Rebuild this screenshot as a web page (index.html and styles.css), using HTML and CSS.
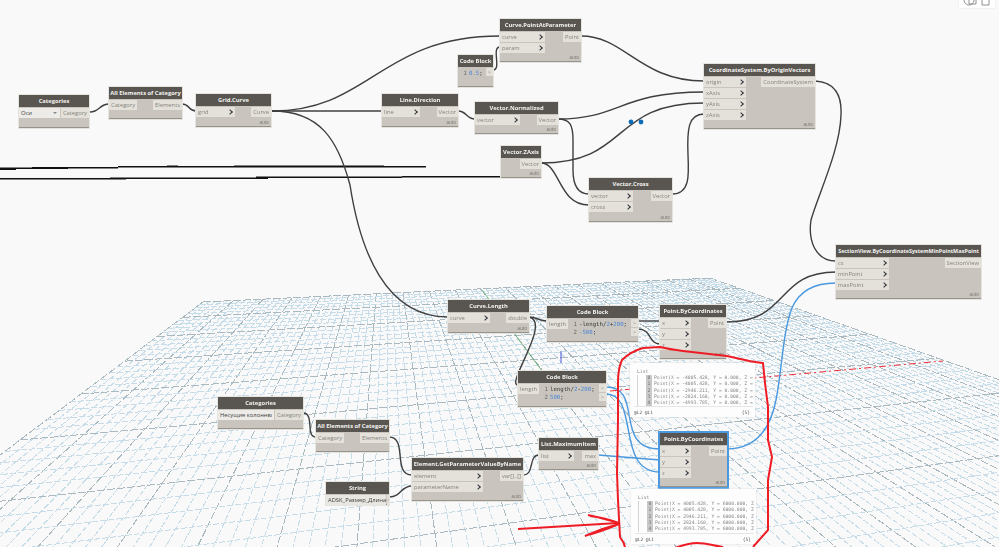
FILE: index.html
```html
<!DOCTYPE html>
<html lang="en">

<head>
    <meta charset="UTF-8">
    <title>Dynamo graph</title>
    <link rel="stylesheet" href="styles.css">
</head>

<body>
    <div class="canvas">

        <!-- floor grid, lines are filled in by grid.js -->
        <svg class="layer" id="floor" width="999" height="547">
            <g id="floorLines"></g>
            <line class="axis-red" x1="610" y1="391" x2="943" y2="361" />
            <line class="axis-green" x1="482" y1="290" x2="542" y2="371" />
            <line class="axis-blue" x1="561" y1="351" x2="561" y2="363" />
        </svg>

        <svg class="layer" width="999" height="547">
            <g class="stray">
                <path d="M0 168H16V170H0Z M0 167.500H68V169H0Z M32 167H118V168.500H32Z M118 166H426V167.500H118Z M167 165.500H178V167H167Z M234 165.500H384V167H234Z" />
                <path d="M0 178H126V179.500H0Z M110 177.500H126V179.500H110Z M126 177.500H268V179H126Z M256 176.500H402V178H256Z M402 176H501V177.500H402Z" />
            </g>
            <g class="wires">
                <path d="M90 112C100 112 99 104 109 104" />
                <path d="M182 104C190 104 188 111 196 111" />
                <path d="M272 111C370 111 380 36 500 36" />
                <path d="M272 111H382" />
                <path d="M272 111C320 111 338 140 350 185C360 250 385 317 448 317" />
                <path d="M458 111C467 111 466 119 475 119" />
                <path d="M493 70C502 70 491 47 500 47" />
                <path d="M558 119C620 119 620 92 704 92" />
                <path d="M558 119C570 119 573 125 573 140V170C573 185 578 194 589 194" />
                <path d="M581 36C625 36 640 81 704 81" />
                <path d="M541 163C630 163 610 103 704 103" />
                <path d="M541 163C560 163 558 205 589 205" />
                <path d="M672 194C690 194 689 175 688 155C687 130 688 114 704 114" />
                <path d="M815 81C835 82 842 95 841 115C840 150 818 195 811 220C808 240 815 261 836 261" />
                <path d="M726 322C790 322 775 272 836 272" />
                <path d="M529 317C538 317 538 321 547 321" />
                <path d="M529 317C552 322 505 385 518 385" />
                <path d="M638 321H660" />
                <path d="M638 329C652 329 648 344 660 344" />
                <path d="M303 413C315 413 305 437 316 437" />
                <path d="M389 437C408 437 392 475 412 475" />
                <path d="M389 497C402 497 400 486 412 486" />
                <path d="M523 475C535 475 528 455 539 455" />
            </g>
            <g class="wires wires-blue">
                <path d="M727 449C755 449 770 430 776 400C782 370 783 330 792 308C798 294 810 283 836 283" />
                <path d="M606 387C645 387 612 449 660 449" />
                <path d="M606 394C640 394 615 472 660 472" />
                <path d="M598 455L660 460" />
            </g>
            <circle class="handle" cx="631" cy="122" r="2.400" />
            <circle class="handle" cx="641" cy="122" r="2.400" />
        </svg>

        <div class="node n-categories">
            <div class="node-title">Categories</div>
            <div class="node-ports">
                <div class="picker">Оси<span class="caret"></span></div>
                <div class="outputs"><div class="port">Category</div></div>
            </div>
        </div>

        <div class="node n-elements">
            <div class="node-title">All Elements of Category</div>
            <div class="node-ports">
                <div class="inputs"><div class="port">Category</div></div>
                <div class="outputs"><div class="port">Elements</div></div>
            </div>
        </div>

        <div class="node n-grid-curve">
            <div class="node-title">Grid.Curve</div>
            <div class="node-ports">
                <div class="inputs"><div class="port">grid<span class="chev"></span></div></div>
                <div class="outputs"><div class="port">Curve</div></div>
            </div>
            <div class="lacing">auto</div>
        </div>

        <div class="node n-line-dir">
            <div class="node-title">Line.Direction</div>
            <div class="node-ports">
                <div class="inputs"><div class="port">line<span class="chev"></span></div></div>
                <div class="outputs"><div class="port">Vector</div></div>
            </div>
            <div class="lacing">auto</div>
        </div>

        <div class="node n-code-param">
            <div class="node-title">Code Block</div>
            <div class="code-row">
                <div class="code">
                    <div class="code-line"><i>1</i><b>0.5</b>;</div>
                </div>
                <div class="code-outs"><span>&gt;</span></div>
            </div>
        </div>

        <div class="node n-point-param">
            <div class="node-title">Curve.PointAtParameter</div>
            <div class="node-ports">
                <div class="inputs">
                    <div class="port">curve<span class="chev"></span></div>
                    <div class="port">param<span class="chev"></span></div>
                </div>
                <div class="outputs"><div class="port">Point</div></div>
            </div>
            <div class="lacing">auto</div>
        </div>

        <div class="node n-normalized">
            <div class="node-title">Vector.Normalized</div>
            <div class="node-ports">
                <div class="inputs"><div class="port">vector<span class="chev"></span></div></div>
                <div class="outputs"><div class="port">Vector</div></div>
            </div>
            <div class="lacing">auto</div>
        </div>

        <div class="node n-zaxis">
            <div class="node-title">Vector.ZAxis</div>
            <div class="node-ports">
                <div class="inputs"></div>
                <div class="outputs"><div class="port">Vector</div></div>
            </div>
            <div class="lacing">auto</div>
        </div>

        <div class="node n-cross">
            <div class="node-title">Vector.Cross</div>
            <div class="node-ports">
                <div class="inputs">
                    <div class="port">vector<span class="chev"></span></div>
                    <div class="port">cross<span class="chev"></span></div>
                </div>
                <div class="outputs"><div class="port">Vector</div></div>
            </div>
            <div class="lacing">auto</div>
        </div>

        <div class="node n-coord">
            <div class="node-title">CoordinateSystem.ByOriginVectors</div>
            <div class="node-ports">
                <div class="inputs">
                    <div class="port">origin<span class="chev"></span></div>
                    <div class="port">xAxis<span class="chev"></span></div>
                    <div class="port">yAxis<span class="chev"></span></div>
                    <div class="port">zAxis<span class="chev"></span></div>
                </div>
                <div class="outputs"><div class="port">CoordinateSystem</div></div>
            </div>
            <div class="lacing">auto</div>
        </div>

        <div class="node n-section">
            <div class="node-title">SectionView.ByCoordinateSystemMinPointMaxPoint</div>
            <div class="node-ports">
                <div class="inputs">
                    <div class="port">cs<span class="chev"></span></div>
                    <div class="port">minPoint<span class="chev"></span></div>
                    <div class="port">maxPoint<span class="chev"></span></div>
                </div>
                <div class="outputs"><div class="port">SectionView</div></div>
            </div>
            <div class="lacing">auto</div>
        </div>

        <div class="node n-length">
            <div class="node-title">Curve.Length</div>
            <div class="node-ports">
                <div class="inputs"><div class="port">curve<span class="chev"></span></div></div>
                <div class="outputs"><div class="port">double</div></div>
            </div>
            <div class="lacing">auto</div>
        </div>

        <div class="node n-code-one">
            <div class="node-title">Code Block</div>
            <div class="code-row">
                <div class="code-input">length</div>
                <div class="code">
                    <div class="code-line"><i>1</i>-length/<b>2</b>+<b>200</b>;</div>
                    <div class="code-line"><i>2</i><b>-500</b>;</div>
                </div>
                <div class="code-outs"><span>&gt;</span><span>&gt;</span></div>
            </div>
        </div>

        <div class="node n-code-two">
            <div class="node-title">Code Block</div>
            <div class="code-row">
                <div class="code-input">length</div>
                <div class="code">
                    <div class="code-line"><i>1</i>length/<b>2</b>-<b>200</b>;</div>
                    <div class="code-line"><i>2</i><b>500</b>;</div>
                </div>
                <div class="code-outs"><span>&gt;</span><span>&gt;</span></div>
            </div>
        </div>

        <div class="node n-point-one">
            <div class="node-title">Point.ByCoordinates</div>
            <div class="node-ports">
                <div class="inputs">
                    <div class="port">x<span class="chev"></span></div>
                    <div class="port">y<span class="chev"></span></div>
                    <div class="port">z<span class="chev"></span></div>
                </div>
                <div class="outputs"><div class="port">Point</div></div>
            </div>
            <div class="lacing">auto</div>
        </div>

        <div class="watch w-one">
            <div class="watch-head">List</div>
            <div class="watch-rows">
                <div class="watch-row"><i>0</i>Point(X = -4005.428, Y = 0.000, Z =</div>
                <div class="watch-row"><i>1</i>Point(X = -4005.428, Y = 0.000, Z =</div>
                <div class="watch-row"><i>2</i>Point(X = -2946.211, Y = 0.000, Z =</div>
                <div class="watch-row"><i>3</i>Point(X = -2824.160, Y = 0.000, Z =</div>
                <div class="watch-row"><i>4</i>Point(X = -4993.785, Y = 0.000, Z =</div>
            </div>
            <div class="watch-foot"><span>@L2 @L1</span><span>{5}</span></div>
        </div>

        <div class="node n-point-two">
            <div class="node-title">Point.ByCoordinates</div>
            <div class="node-ports">
                <div class="inputs">
                    <div class="port">x<span class="chev"></span></div>
                    <div class="port">y<span class="chev"></span></div>
                    <div class="port">z<span class="chev"></span></div>
                </div>
                <div class="outputs"><div class="port">Point</div></div>
            </div>
            <div class="lacing">auto</div>
        </div>

        <div class="watch w-two">
            <div class="watch-head">List</div>
            <div class="watch-rows">
                <div class="watch-row"><i>0</i>Point(X = 4005.428, Y = 6000.000, Z</div>
                <div class="watch-row"><i>1</i>Point(X = 4005.428, Y = 6000.000, Z</div>
                <div class="watch-row"><i>2</i>Point(X = 2946.211, Y = 6000.000, Z</div>
                <div class="watch-row"><i>3</i>Point(X = 2824.160, Y = 6000.000, Z</div>
                <div class="watch-row"><i>4</i>Point(X = 4993.785, Y = 6000.000, Z</div>
            </div>
            <div class="watch-foot"><span>@L2 @L1</span><span>{5}</span></div>
        </div>

        <div class="node n-categories-two">
            <div class="node-title">Categories</div>
            <div class="node-ports">
                <div class="picker">Несущие колонны<span class="caret"></span></div>
                <div class="outputs"><div class="port">Category</div></div>
            </div>
        </div>

        <div class="node n-elements-two">
            <div class="node-title">All Elements of Category</div>
            <div class="node-ports">
                <div class="inputs"><div class="port">Category</div></div>
                <div class="outputs"><div class="port">Elements</div></div>
            </div>
        </div>

        <div class="node n-string">
            <div class="node-title">String</div>
            <div class="node-ports">
                <div class="string-value">ADSK_Размер_Длина</div>
                <div class="string-out">&gt;</div>
            </div>
        </div>

        <div class="node n-param">
            <div class="node-title">Element.GetParameterValueByName</div>
            <div class="node-ports">
                <div class="inputs">
                    <div class="port">element<span class="chev"></span></div>
                    <div class="port">parameterName<span class="chev"></span></div>
                </div>
                <div class="outputs"><div class="port">var[]..[]</div></div>
            </div>
            <div class="lacing">auto</div>
        </div>

        <div class="node n-max">
            <div class="node-title">List.MaximumItem</div>
            <div class="node-ports">
                <div class="inputs"><div class="port">list<span class="chev"></span></div></div>
                <div class="outputs"><div class="port">max</div></div>
            </div>
            <div class="lacing">auto</div>
        </div>

        <!-- hand drawn red markup on top of the graph -->
        <svg class="layer" width="999" height="547">
            <g class="markup">
                <path d="M625 549C625 541 621 540 620 537L618 500L617 473L618 420L618 383C618 372 620 364 622 360C628 354 636 350 643 348L660 347C668 349 675 350 683 351L727 356L745 360C752 362 758 362 763 363L765 383L768 407L768 440L772 457L768 480L768 530L753 547" />
                <path d="M672 549C680 546 690 543 697 543C706 543 715 546 723 547" />
                <path d="M518 529L618 523" />
                <path d="M588 515C598 517 608 520 619 523C608 519 600 517 590 516" />
                <path d="M585 536C596 531 607 527 619 524C607 529 597 533 587 535" />
            </g>
        </svg>

        <div class="view-tools">
            <svg width="30" height="8" viewBox="0 0 30 8">
                <circle cx="7" cy="0" r="5" />
                <path d="M7 0V4H14V0" />
                <path d="M20 0V5H27V0" />
            </svg>
        </div>
    </div>

    <script src="grid.js"></script>
</body>

</html>
```

FILE: styles.css
```css
body {
    margin: 0;
    background-color: #f9f9f9;
    font-family: "Open Sans", "Noto Sans", sans-serif;
}

.canvas {
    position: relative;
    width: 999px;
    height: 547px;
    overflow: hidden;
    filter: blur(0.35px);
}

.layer {
    position: absolute;
    top: 0;
    left: 0;
}

/* floor */
.grid-minor {
    stroke: #c6dde9;
    stroke-width: 1;
    stroke-dasharray: 6 2;
    shape-rendering: crispEdges;
}

.grid-major {
    stroke: #aab8bf;
    stroke-width: 1;
    stroke-dasharray: 8 2;
    shape-rendering: crispEdges;
}

.axis-red {
    stroke: #ee2f3a;
    stroke-width: 1;
    stroke-dasharray: 7 3 2 3;
}

.axis-green {
    stroke: #57a85f;
    stroke-width: 0.8;
}

.axis-blue {
    stroke: #4f58d8;
    stroke-width: 1;
}

/* wires */
.stray {
    fill: #111;
}

.wires path {
    fill: none;
    stroke: #3f3f3f;
    stroke-width: 1.4;
}

.wires-blue path {
    stroke: #4a98de;
}

.handle {
    fill: #0f6cb8;
}

.markup path {
    fill: none;
    stroke: #ee1c25;
    stroke-width: 2;
    stroke-linejoin: round;
}

/* nodes */
.node {
    position: absolute;
    box-sizing: border-box;
    display: flex;
    flex-direction: column;
    background-color: #c9c5be;
    border-bottom: 1px solid #96938c;
    outline: 1px solid #e6e4df;
    font-size: 5.8px;
    line-height: 10px;
    color: #85827c;
}

.node-title {
    flex: none;
    height: 12px;
    background-color: #595651;
    color: #f4f3f0;
    font-size: 5.8px;
    font-weight: 700;
    line-height: 12px;
    text-align: center;
    white-space: nowrap;
    overflow: hidden;
}

.n-section .node-title {
    font-size: 5.4px;
}

.node-ports {
    display: flex;
    justify-content: space-between;
    padding-top: 1px;
}

.inputs,
.outputs {
    display: flex;
    flex-direction: column;
    gap: 1px;
}

.inputs {
    width: var(--in-w, auto);
}

.port {
    display: flex;
    justify-content: space-between;
    align-items: center;
    height: 10px;
    padding: 0 2px;
    background-color: #e4e1da;
    white-space: nowrap;
}

.chev {
    width: 3px;
    height: 3px;
    margin-right: 1px;
    border-top: 1.4px solid #30343a;
    border-right: 1.4px solid #30343a;
    transform: rotate(45deg);
}

.lacing {
    margin-top: auto;
    padding-right: 2px;
    font-size: 4.5px;
    line-height: 8px;
    text-align: right;
    color: #77746e;
}

/* dropdown and string inputs */
.picker {
    position: relative;
    flex: 1;
    height: 10px;
    margin-right: 1px;
    padding-left: 2px;
    background-color: #ecebe8;
    color: #3c3c3c;
    white-space: nowrap;
}

.caret {
    position: absolute;
    top: 4px;
    right: 3px;
    border-top: 2px solid #888;
    border-left: 2px solid transparent;
    border-right: 2px solid transparent;
}

.string-value {
    flex: 1;
    padding-left: 2px;
    background-color: #e9e7e2;
    color: #3c3c3c;
    white-space: nowrap;
}

.string-out {
    width: 8px;
    margin-left: 1px;
    background-color: #e4e1da;
    text-align: center;
}

/* code blocks */
.code-row {
    display: flex;
    padding-top: 1px;
}

.code-input {
    width: 21px;
    height: 10px;
    padding-left: 2px;
    box-sizing: border-box;
    background-color: #e4e1da;
}

.code {
    flex: 1;
    margin-left: 1px;
    padding-top: 1px;
    font-family: "DejaVu Sans Mono", monospace;
    font-size: 5.7px;
    line-height: 8px;
    color: #333;
}

.code-line {
    white-space: nowrap;
}

.code-line i {
    display: inline-block;
    width: 8px;
    margin-right: 2px;
    text-align: right;
    font-style: normal;
    color: #666;
}

.code-line b {
    font-weight: 400;
    color: #4c86d6;
}

.code-outs {
    display: flex;
    flex-direction: column;
    gap: 1px;
    width: 7px;
}

.code-outs span {
    height: 8px;
    background-color: #e4e1da;
    font-size: 5px;
    line-height: 8px;
    text-align: center;
}

/* watch bubbles */
.watch {
    position: absolute;
    box-sizing: border-box;
    display: flex;
    flex-direction: column;
    padding: 5px 2px 0 4px;
    background-color: #fdfdfd;
    box-shadow: 0 0 2px #dcdcdc;
    font-family: "DejaVu Sans Mono", monospace;
    font-size: 4.7px;
    color: #8a8a8a;
}

.watch-head {
    line-height: 7px;
    padding-left: 3px;
}

.watch-rows {
    display: flex;
    flex-direction: column;
    margin: 0 0 0 3px;
    padding-left: 8px;
    border-left: 1px solid #d4d4d4;
}

.watch-row {
    height: 6.300px;
    line-height: 6.300px;
    white-space: nowrap;
}

.watch-row i {
    display: inline-block;
    width: 6px;
    margin-right: 2px;
    background-color: #c9c9c9;
    font-style: normal;
    text-align: center;
    color: #777;
}

.watch-foot {
    display: flex;
    justify-content: space-between;
    margin-top: auto;
    padding: 2px 3px 1px 0;
    border-top: 1px solid #e6e6e6;
    font-size: 4.5px;
    line-height: 7px;
    color: #555;
}

/* node places on the canvas */
.n-categories { left: 19px; top: 95px; width: 70px; height: 33px; }
.n-elements { left: 109px; top: 87px; width: 73px; height: 32px; }
.n-grid-curve { left: 196px; top: 94px; width: 75px; height: 33px; --in-w: 39px; }
.n-line-dir { left: 382px; top: 94px; width: 76px; height: 33px; --in-w: 38px; }
.n-code-param { left: 458px; top: 55px; width: 35px; height: 32px; }
.n-point-param { left: 500px; top: 19px; width: 81px; height: 43px; --in-w: 45px; }
.n-normalized { left: 475px; top: 102px; width: 83px; height: 32px; --in-w: 45px; }
.n-zaxis { left: 501px; top: 146px; width: 40px; height: 32px; --in-w: 0; }
.n-cross { left: 589px; top: 178px; width: 83px; height: 44px; --in-w: 44px; }
.n-coord { left: 704px; top: 64px; width: 111px; height: 65px; --in-w: 42px; }
.n-section { left: 836px; top: 245px; width: 145px; height: 54px; --in-w: 53px; }
.n-length { left: 448px; top: 300px; width: 81px; height: 33px; --in-w: 42px; }
.n-code-one { left: 547px; top: 306px; width: 91px; height: 36px; }
.n-code-two { left: 518px; top: 371px; width: 88px; height: 36px; }
.n-point-one { left: 660px; top: 305px; width: 66px; height: 54px; --in-w: 31px; }
.n-point-two { left: 660px; top: 433px; width: 67px; height: 54px; --in-w: 31px; outline: 2px solid #4a98de; }
.n-categories-two { left: 218px; top: 397px; width: 85px; height: 32px; }
.n-elements-two { left: 316px; top: 420px; width: 73px; height: 32px; }
.n-string { left: 326px; top: 482px; width: 63px; height: 23px; }
.n-param { left: 412px; top: 458px; width: 111px; height: 43px; --in-w: 71px; }
.n-max { left: 539px; top: 438px; width: 59px; height: 32px; --in-w: 35px; }

.w-one { left: 630px; top: 363px; width: 125px; height: 54px; }
.w-two { left: 631px; top: 489px; width: 125px; height: 55px; }

.view-tools {
    position: absolute;
    top: 0;
    left: 959px;
    width: 36px;
    height: 8px;
    background-color: #fff;
    box-shadow: 0 0 2px #ddd;
}

.view-tools svg {
    display: block;
    margin-left: 3px;
    fill: none;
    stroke: #777;
    stroke-width: 0.8;
}
```

FILE: grid.js
```js
// floor grid: two families of lines running to the two vanishing points
var lines = document.getElementById('floorLines');
var K_MAX = 0.2105;
var B_MAX = 0.92;

function project(k, b) {
    var d = k - b + 1;
    return [(k * 3118 - b * 386 + 203) / d, (k * 164 - b * 164 + 302) / d];
}

function addLine(from, to, major) {
    var el = document.createElementNS('http://www.w3.org/2000/svg', 'line');
    el.setAttribute('x1', from[0]);
    el.setAttribute('y1', from[1]);
    el.setAttribute('x2', to[0]);
    el.setAttribute('y2', to[1]);
    el.setAttribute('class', major ? 'grid-major' : 'grid-minor');
    lines.appendChild(el);
}

for (var i = 0; i <= 100; i++) {
    var k = K_MAX * i / 100;
    addLine(project(k, 0), project(k, B_MAX), i % 5 == 0);
}

for (var j = 0; j <= 46; j++) {
    var b = j * 0.02;
    addLine(project(0, b), project(K_MAX, b), j % 5 == 0);
}
```
